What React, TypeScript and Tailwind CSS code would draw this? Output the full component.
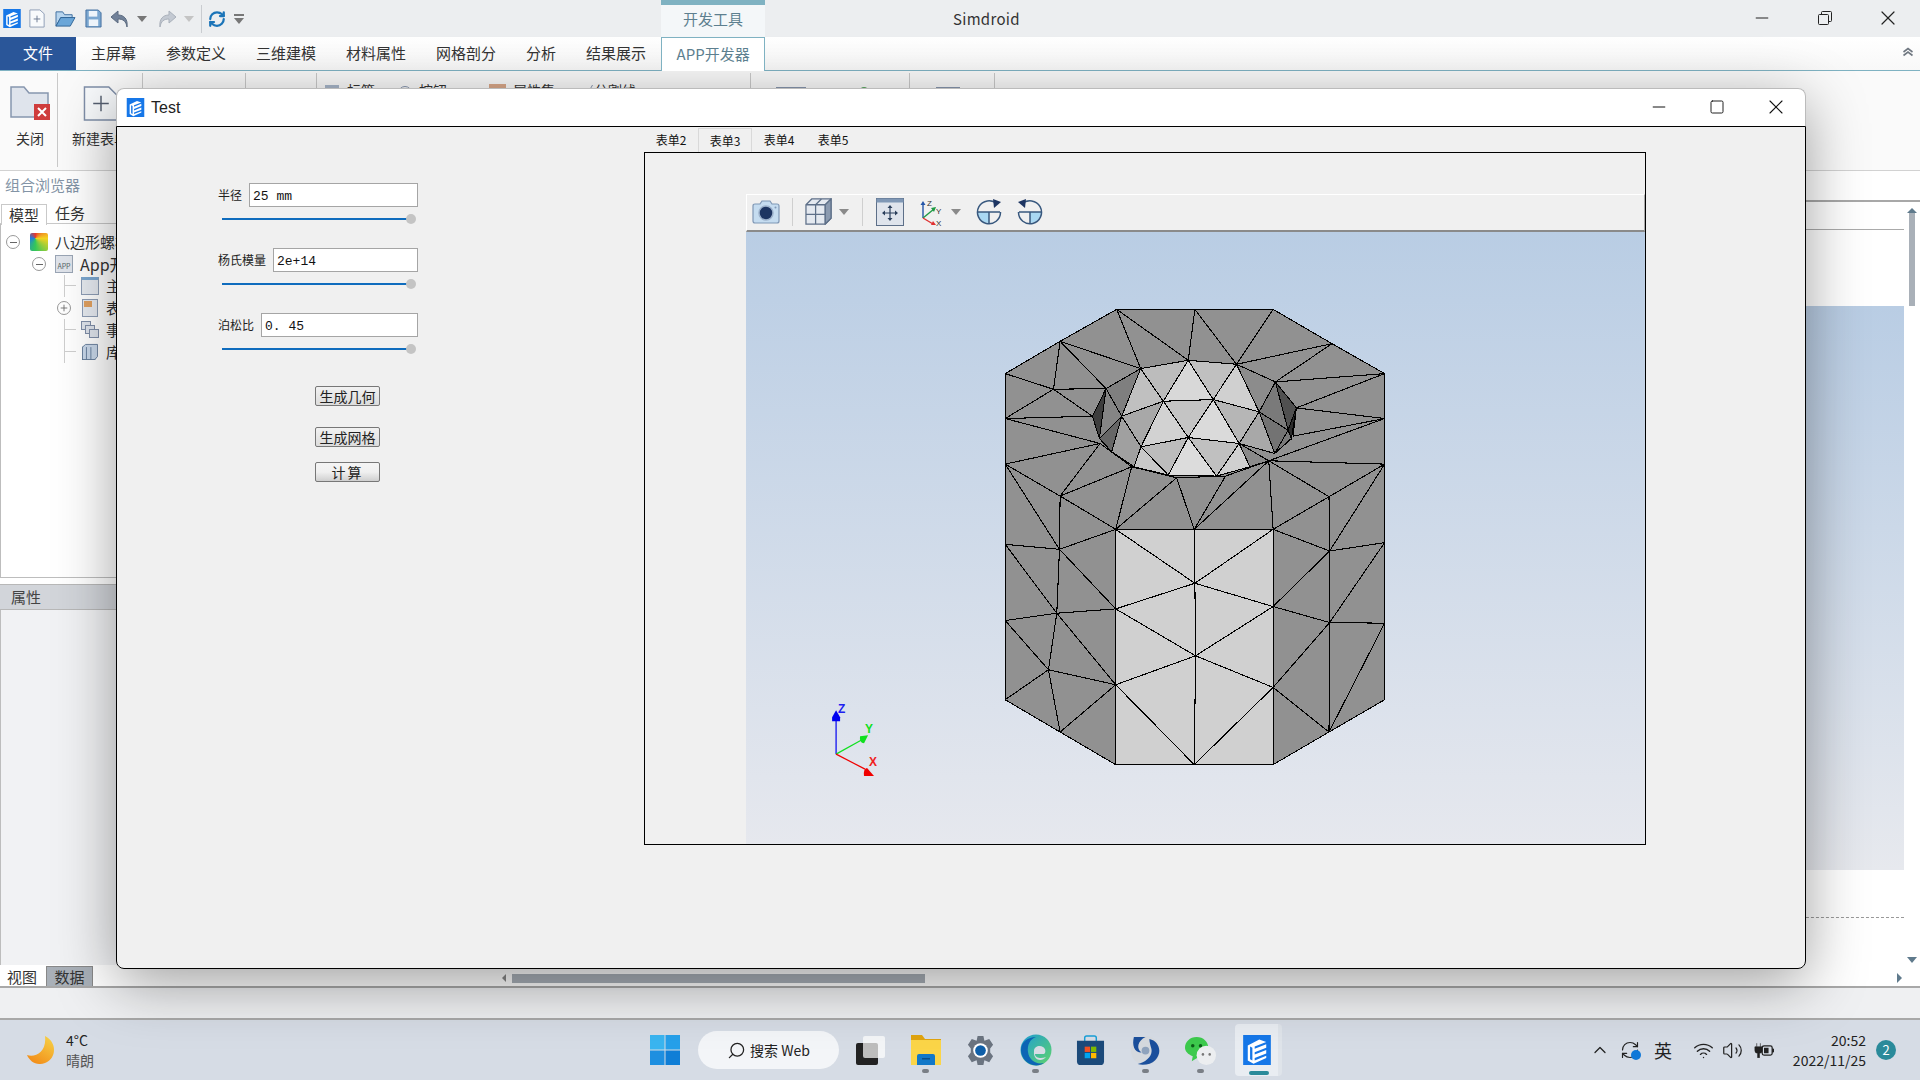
import { ChevronUp, Minus, Plus, RefreshCw, Search, Square, Volume2, Wifi, X } from "lucide-react";

const Logo = ({ className }: { className: string }) => (
  <svg viewBox="0 0 24 26" className={className}>
    <rect width="24" height="26" fill="#1677e8" />
    <path d="M4 9 L14 4 L20 6 L10 10 V12 L20 8 V11 L10 15 V17 L20 13 V16 L10 20 V22 L20 18 V20 L9 25 L4 22 Z" fill="#fff" />
    <path d="M6 10 L8 11 V22 L6 21 Z" fill="#1677e8" />
  </svg>
);

const Caret = ({ className = "border-t-[#8a8a8a]" }: { className?: string }) => (
  <span className={`block w-0 h-0 border-x-[5px] border-x-transparent border-t-[6px] ${className}`} />
);

const tabs = ["主屏幕", "参数定义", "三维建模", "材料属性", "网格剖分", "分析", "结果展示"];

const TitleBar = () => (
  <div className="h-[37px] bg-[#eceef0] flex items-center relative shrink-0">
    <Logo className="w-[20px] h-[19px] ml-[2px]" />
    <svg viewBox="0 0 18 20" className="w-[18px] h-[19px] ml-[6px]">
      <path d="M1.5 1 H12 L16.5 5 V19 H1.5 Z" fill="#f8fafc" stroke="#8e9db5" />
      <path d="M9 7 V14 M5.5 10.5 H12.5" stroke="#6c7a92" />
    </svg>
    <svg viewBox="0 0 22 20" className="w-[21px] h-[19px] ml-[9px]">
      <path d="M1 3 H8 L10 6 H18 V9 H6 L1 18 Z" fill="#b8d5ee" stroke="#3f6f9f" />
      <path d="M6 9 H21 L16 18 H1 Z" fill="#6ba6d8" stroke="#2f6496" />
    </svg>
    <svg viewBox="0 0 18 20" className="w-[17px] h-[19px] ml-[9px]">
      <path d="M1 1 H14 L17 4 V19 H1 Z" fill="#7ba7d0" stroke="#436f9f" />
      <rect x="4" y="2" width="9" height="6" fill="#eef4fa" />
      <rect x="4" y="11" width="10" height="7" fill="#eef4fa" />
    </svg>
    <svg viewBox="0 0 20 20" className="w-[20px] h-[20px] ml-[8px]">
      <path d="M8 2 L1 8 L8 14 V10 C13 10 16 12 17 18 C18 10 14 6 8 6 Z" fill="#718199" stroke="#5c6b80" />
    </svg>
    <span className="ml-[7px]"><Caret className="border-t-[#777]" /></span>
    <svg viewBox="0 0 20 20" className="w-[20px] h-[20px] ml-[10px]">
      <path d="M12 2 L19 8 L12 14 V10 C7 10 4 12 3 18 C2 10 6 6 12 6 Z" fill="#c3c9d2" stroke="#aab1bb" />
    </svg>
    <span className="ml-[7px]"><Caret className="border-t-[#c4c4c4]" /></span>
    <span className="w-px h-[28px] bg-[#c9ccd0] ml-[7px]" />
    <RefreshCw className="w-[18px] h-[20px] ml-[6px] text-[#1b74b8]" strokeWidth={3} />
    <span className="flex flex-col items-center gap-[2px] ml-[8px]">
      <span className="w-[10px] h-[2px] bg-[#777]" />
      <Caret className="border-t-[#777]" />
    </span>
    <div className="absolute left-[661px] top-0 w-[104px] h-[37px] bg-[#f4f7f9] border-t-[5px] border-[#7fb2c2] text-[15px] text-[#5d7f8f] flex items-center justify-center pb-[4px]">
      开发工具
    </div>
    <span className="absolute left-[953px] top-[8px] text-[15px] text-[#333] tracking-[0.3px]">Simdroid</span>
    <Minus className="absolute left-[1752px] top-[8px] w-[20px] h-[20px] text-[#222]" strokeWidth={1.2} />
    <svg viewBox="0 0 14 14" className="absolute left-[1818px] top-[11px] w-[14px] h-[14px]" fill="none" stroke="#222">
      <rect x="0.5" y="3.5" width="10" height="10" rx="1" />
      <path d="M3.5 3.5 V1.5 Q3.5 .5 4.5 .5 H12.5 Q13.5 .5 13.5 1.5 V9.5 Q13.5 10.5 12.5 10.5 H10.5" />
    </svg>
    <X className="absolute left-[1876px] top-[6px] w-[24px] h-[24px] text-[#222]" strokeWidth={1.2} />
  </div>
);

const TabBar = () => (
  <div className="h-[33px] flex bg-gradient-to-b from-white to-[#f8f8f8] relative shrink-0 text-[15px] text-[#333]">
    <div className="w-[76px] bg-[#2a5699] text-white flex items-center justify-center">文件</div>
    {tabs.map((t) => (
      <div key={t} className="px-[15px] flex items-center">{t}</div>
    ))}
    <div className="w-[104px] h-[34px] bg-white border-x border-t border-[#7fb2c2] text-[#5d7f8f] flex items-center justify-center z-10">
      APP开发器
    </div>
    <svg viewBox="0 0 12 10" className="absolute left-[1902px] top-[10px] w-[12px] h-[10px]" fill="none" stroke="#6f7780" strokeWidth="1.6">
      <path d="M1.5 5 L6 1.5 L10.5 5 M1.5 8.5 L6 5 L10.5 8.5" />
    </svg>
  </div>
);

const Ribbon = () => (
  <div className="h-[101px] bg-[#fafafa] border-t border-b border-t-[#7fb2c2] border-b-[#d2d2d2] flex text-[14px] text-[#333] shrink-0">
    <div className="w-[58px] h-[94px] mt-[2px] border-r border-[#c9c9c9] flex flex-col items-center pt-[13px] pl-[3px]">
      <svg viewBox="0 0 40 34" className="w-[40px] h-[34px]">
        <path d="M1 1 H14 L19 7 H38 V31 H1 Z" fill="#dfe4ec" stroke="#8796ae" strokeWidth="1.5" />
        <rect x="24" y="18" width="16" height="16" fill="#cf3c3c" />
        <path d="M28 22 L36 30 M36 22 L28 30" stroke="#fff" strokeWidth="2" />
      </svg>
      <span className="mt-[8px]">关闭</span>
    </div>
    <div className="w-[85px] h-[94px] mt-[2px] border-r border-[#c9c9c9] flex flex-col items-center pt-[13px] whitespace-nowrap">
      <svg viewBox="0 0 36 36" className="w-[36px] h-[35px] ml-[2px]">
        <path d="M1 1 H26 L35 10 V35 H1 Z" fill="#f8fafc" stroke="#7f8ea8" strokeWidth="1.5" />
        <path d="M18 10 V26 M10 18 H26" stroke="#555f70" strokeWidth="1.5" />
      </svg>
      <span className="mt-[7px]">新建表单</span>
    </div>
    <div className="w-[103px] h-[94px] mt-[2px] border-r border-[#c9c9c9]" />
    <div className="w-[71px] h-[94px] mt-[2px] border-r border-[#c9c9c9]" />
    <div className="w-[434px] h-[94px] mt-[2px] border-r border-[#c9c9c9] flex items-start pt-[7px] pl-[8px] text-[14px]">
      <span className="w-[14px] h-[16px] bg-[#a8b6c9] mt-[5px]" />
      <span className="ml-[8px]">标签</span>
      <span className="w-[14px] h-[14px] rounded-full border border-[#8796ae] ml-[23px] mt-[6px]" />
      <span className="ml-[7px]">按钮</span>
      <span className="w-[17px] h-[14px] bg-[#d9a88a] ml-[42px] mt-[4px]" />
      <span className="ml-[7px]">属性集</span>
      <span className="w-[9px] h-[14px] ml-[25px] mt-[5px] border-r border-[#8796ae] -skew-x-[30deg]" />
      <span className="ml-[5px]">分割线</span>
    </div>
    <div className="w-[159px] h-[94px] mt-[2px] border-r border-[#c9c9c9] flex items-start pt-[14px] pl-[25px]">
      <span className="w-[30px] h-[26px] bg-[#d5dbe4] border border-[#8796ae]" />
      <span className="w-[8px] h-[8px] rounded-full bg-[#58a55c] ml-[54px]" />
    </div>
    <div className="w-[85px] h-[94px] mt-[2px] border-r border-[#c9c9c9] flex items-start pt-[14px] pl-[26px]">
      <span className="w-[24px] h-[26px] bg-[#d5dbe4] border border-[#8796ae]" />
    </div>
  </div>
);

const Branch = () => (
  <span className="w-[12px] h-full border-l border-[#cfcfcf] flex flex-col ml-[63px] shrink-0">
    <span className="h-1/2 border-b border-[#cfcfcf]" />
  </span>
);

const LeftPanel = () => (
  <div className="w-[500px] flex flex-col text-[15px] text-[#333] shrink-0">
    <div className="h-[33px] flex items-center pl-[5px] pb-[5px] text-[#8394a6]">组合浏览器</div>
    <div className="h-[20px] flex border-b border-[#c9c9c9] relative">
      <div className="w-[46px] h-[21px] border border-b-0 border-[#c9c9c9] bg-white ml-px flex items-center justify-center z-10">模型</div>
      <div className="ml-[8px] flex items-center">任务</div>
    </div>
    <div className="h-[354px] border-l border-[#bdbdbd] pt-[7px] border-b">
      <div className="h-[22px] flex items-center pl-[5px]">
        <span className="w-[14px] h-[14px] rounded-full border border-[#999] flex items-center justify-center"><span className="w-[7px] h-px bg-[#666]" /></span>
        <span className="w-[18px] h-[18px] ml-[10px] rounded-[2px] bg-[conic-gradient(at_30%_30%,#e8352c,#f4d21f,#34c759,#1f7de0,#e8352c)]" />
        <span className="ml-[7px]">八边形螺栓</span>
      </div>
      <div className="h-[22px] flex items-center pl-[31px]">
        <span className="w-[14px] h-[14px] rounded-full border border-[#999] flex items-center justify-center"><span className="w-[7px] h-px bg-[#666]" /></span>
        <span className="w-[18px] h-[18px] ml-[9px] bg-[#dfe3ea] border border-[#9aa5b5] text-[7px] leading-[20px] text-center text-[#566]">APP</span>
        <span className="ml-[7px] text-[16px]">App开发器</span>
      </div>
      <div className="h-[22px] flex items-center">
        <Branch />
        <span className="w-[18px] h-[18px] ml-[5px] bg-[#e6eaf0] border border-[#8e9db5] border-t-[3px] border-t-[#7ba7d0]" />
        <span className="ml-[7px]">主窗口</span>
      </div>
      <div className="h-[22px] flex items-center pl-[56px]">
        <span className="w-[14px] h-[14px] rounded-full border border-[#999] flex items-center justify-center"><Plus className="w-[10px] h-[10px] text-[#666]" /></span>
        <span className="w-[16px] h-[18px] ml-[11px] bg-[#e6eaf0] border border-[#8e9db5] flex items-start p-px"><span className="w-[8px] h-[6px] bg-[#e0a060]" /></span>
        <span className="ml-[8px]">表单</span>
      </div>
      <div className="h-[22px] flex items-center">
        <Branch />
        <svg viewBox="0 0 18 18" className="w-[18px] h-[18px] ml-[5px]" fill="#dfe4ec" stroke="#7f8ea8">
          <rect x="0.5" y="0.5" width="9" height="8" />
          <rect x="4.5" y="4.5" width="9" height="8" />
          <rect x="8.5" y="8.5" width="9" height="8" />
        </svg>
        <span className="ml-[7px]">事件</span>
      </div>
      <div className="h-[22px] flex items-center">
        <Branch />
        <svg viewBox="0 0 18 18" className="w-[16px] h-[18px] ml-[6px]" fill="#c9d8ea" stroke="#5f7896">
          <rect x="0.5" y="3.5" width="14" height="14" />
          <path d="M5 3.5 V17.5 M10 3.5 V17.5 M0.5 3.5 L4 0.5 H17.5 V14 L14.5 17.5" />
        </svg>
        <span className="ml-[8px]">库</span>
      </div>
    </div>
    <div className="h-[6px]" />
    <div className="h-[26px] bg-[#d2d5da] border-y border-[#b8b8b8] flex items-center pl-[11px] text-[#444]">属性</div>
    <div className="h-[355px] bg-[#f1f2f4] border-l border-[#bdbdbd]" />
    <div className="h-[21px] flex items-end pl-[1px] relative">
      <div className="w-[42px] h-[20px] bg-white flex items-center justify-center pt-[2px]">视图</div>
      <div className="w-[47px] h-[20px] ml-[3px] bg-[#a9b0b8] border border-b-0 border-[#888] flex items-center justify-center pt-[2px]">数据</div>
    </div>
  </div>
);

const DocArea = () => (
  <div className="flex-1 flex flex-col min-w-0">
    <div className="flex-1 mt-[29px] border-t-2 border-[#a8a8a8] flex min-h-0">
      <div className="flex-1 flex flex-col">
        <div className="h-[28px] border-b border-[#aaa]" />
        <div className="h-[76px]" />
        <div className="h-[564px] bg-gradient-to-b from-[#b9cde4] to-[#e7e9ee]" />
        <div className="h-[48px] border-b border-dashed border-[#999]" />
      </div>
      <div className="w-[16px] flex flex-col items-center pt-[6px]">
        <span className="w-0 h-0 border-x-[5px] border-x-transparent border-b-[5px] border-b-[#5f7a8c]" />
        <span className="w-[6px] h-[93px] bg-[#a9b0b8]" />
        <span className="mt-auto mb-[7px]"><Caret className="border-t-[#5f7a8c]" /></span>
      </div>
    </div>
    <div className="h-[16px] flex items-center pr-[18px]">
      <span className="w-0 h-0 border-y-[4px] border-y-transparent border-r-[4px] border-r-[#888] ml-[2px]" />
      <span className="w-[413px] h-[9px] bg-[#a9b0b8] ml-[6px]" />
      <span className="w-0 h-0 border-y-[5px] border-y-transparent border-l-[5px] border-l-[#5f7a8c] ml-auto" />
    </div>
  </div>
);

const TaskIcon = ({ children, running }: { children: React.ReactNode; running?: boolean }) => (
  <div className="relative w-[55px] h-[60px] flex items-center justify-center">
    {children}
    {running && <span className="absolute bottom-[7px] w-[7px] h-[4px] rounded-full bg-[#7a7f86]" />}
  </div>
);

const Taskbar = () => (
  <div className="h-[60px] bg-[#d6dce5] flex items-center shrink-0 text-[#222]">
    <div className="w-[650px] pl-[27px] flex items-center">
      <svg viewBox="0 0 28 28" className="w-[28px] h-[28px]">
        <defs>
          <linearGradient id="moon" x1="0.8" y1="0" x2="0.2" y2="1">
            <stop offset="0" stopColor="#f6cf45" />
            <stop offset="1" stopColor="#f28a17" />
          </linearGradient>
        </defs>
        <path d="M18 0 C30 6 30 22 18 27 C10 30 3 26 0 19 C8 22 20 16 18 0 Z" fill="url(#moon)" />
      </svg>
      <div className="ml-[11px] flex flex-col text-[14px] leading-[20px]">
        <span>4°C</span>
        <span className="text-[#555]">晴朗</span>
      </div>
    </div>
    <svg viewBox="0 0 30 30" className="w-[30px] h-[30px]">
      <rect x="0" y="0" width="14.5" height="14.5" fill="#3ab5f0" />
      <rect x="15.5" y="0" width="14.5" height="14.5" fill="#26a0ea" />
      <rect x="0" y="15.5" width="14.5" height="14.5" fill="#1e8fe0" />
      <rect x="15.5" y="15.5" width="14.5" height="14.5" fill="#0f7ed6" />
    </svg>
    <div className="ml-[18px] w-[141px] h-[38px] rounded-full bg-[#f3f5f8] flex items-center justify-center gap-[4px] text-[14px]">
      <Search className="w-[19px] h-[19px] -scale-x-100" strokeWidth={1.6} />
      <span>搜索 Web</span>
    </div>
    <div className="ml-[4px] flex">
      <TaskIcon>
        <div className="relative w-[29px] h-[29px]">
          <span className="absolute left-0 bottom-0 w-[22px] h-[22px] bg-[#222] rounded-[2px]" />
          <span className="absolute right-0 top-0 w-[22px] h-[22px] bg-white/70 rounded-[2px]" />
        </div>
      </TaskIcon>
      <TaskIcon running>
        <svg viewBox="0 0 32 32" className="w-[32px] h-[32px]">
          <path d="M1 1 H12 L15 5 H31 V31 H1 Z" fill="#e0a40f" />
          <rect x="1" y="6" width="30" height="25" fill="#fbd548" />
          <path d="M7 22 Q7 20 9 20 H23 Q25 20 25 22 V31 H7 Z" fill="#1278c8" />
          <rect x="12" y="24" width="8" height="1.5" fill="#0b4f8a" />
        </svg>
      </TaskIcon>
      <TaskIcon>
        <svg viewBox="0 0 32 32" className="w-[31px] h-[31px]">
          <path d="M13 1 H19 L20 6 L25 4 L29 10 L26 14 V18 L29 22 L25 28 L20 26 L19 31 H13 L12 26 L7 28 L3 22 L6 18 V14 L3 10 L7 4 L12 6 Z" fill="#6b7480" />
          <circle cx="16" cy="16" r="7.5" fill="#fff" />
          <circle cx="16" cy="16" r="5.5" fill="#0f5fa8" />
        </svg>
      </TaskIcon>
      <TaskIcon running>
        <svg viewBox="0 0 32 32" className="w-[32px] h-[32px]">
          <defs>
            <linearGradient id="edge" x1="0" y1="0" x2="1" y2="1">
              <stop offset="0" stopColor="#1f9fd8" />
              <stop offset="1" stopColor="#5fd36a" />
            </linearGradient>
          </defs>
          <circle cx="16" cy="16" r="15.5" fill="url(#edge)" />
          <path d="M1 16 C1 8 8 3 16 3 C10 5 7 11 8 18 C9 26 16 31 24 29 C20 32 14 32 10 30 C5 28 1 22 1 16 Z" fill="#0c65b5" />
          <path d="M14 17 C14 12 20 11 23 13 C26 15 26 19 24 20 H15 C15 24 21 25 26 23 C22 28 13 27 14 17 Z" fill="#d6dce5" />
        </svg>
      </TaskIcon>
      <TaskIcon>
        <svg viewBox="0 0 30 32" className="w-[29px] h-[31px]">
          <path d="M9 7 V3 Q9 1 11 1 H19 Q21 1 21 3 V7" fill="none" stroke="#18a0d8" strokeWidth="1.5" />
          <path d="M1 6 H29 V27 Q29 31 25 31 H5 Q1 31 1 27 Z" fill="#1c4a7a" />
          <rect x="9" y="12" width="5.5" height="5.5" fill="#f25022" />
          <rect x="15.5" y="12" width="5.5" height="5.5" fill="#7fba00" />
          <rect x="9" y="18.5" width="5.5" height="5.5" fill="#00a4ef" />
          <rect x="15.5" y="18.5" width="5.5" height="5.5" fill="#ffb900" />
        </svg>
      </TaskIcon>
      <TaskIcon running>
        <svg viewBox="0 0 32 32" className="w-[31px] h-[31px]">
          <circle cx="16" cy="16" r="15" fill="#d5d9de" />
          <path d="M4 2 H16 C8 6 6 14 12 18 C4 18 2 10 4 2 Z" fill="#1b4f9c" />
          <path d="M20 4 C30 6 34 18 26 26 C22 30 14 32 8 30 C16 28 24 22 22 14 C21 10 20 7 20 4 Z" fill="#1b4f9c" />
          <circle cx="16" cy="16" r="4" fill="#8fa3bd" />
        </svg>
      </TaskIcon>
      <TaskIcon running>
        <svg viewBox="0 0 32 32" className="w-[31px] h-[31px]">
          <path d="M12 2 C19 2 24 7 24 13 C24 19 19 24 12 24 L7 27 L8 22 C3 20 0 17 0 13 C0 7 5 2 12 2 Z" fill="#3dca4d" />
          <circle cx="8" cy="11" r="1.8" fill="#0d5f1a" />
          <circle cx="16" cy="11" r="1.8" fill="#0d5f1a" />
          <circle cx="22" cy="21" r="10" fill="#eceef0" />
          <circle cx="18.5" cy="20" r="1.3" fill="#777" />
          <circle cx="25.5" cy="20" r="1.3" fill="#777" />
        </svg>
      </TaskIcon>
      <div className="relative w-[55px] h-[60px] ml-[3px] flex items-center justify-center">
        <div className="w-[47px] h-[52px] rounded-[4px] bg-[#e9edf2] flex items-center justify-center border-r-4 border-[#dfe4ea]">
          <Logo className="w-[30px] h-[30px]" />
        </div>
        <span className="absolute bottom-[5px] w-[20px] h-[4px] rounded-full bg-[#2a8a9a]" />
      </div>
    </div>
    <div className="ml-auto pr-[24px] flex items-center">
      <ChevronUp className="w-[20px] h-[20px]" strokeWidth={1.5} />
      <div className="relative ml-[10px]">
        <RefreshCw className="w-[20px] h-[20px]" strokeWidth={1.4} />
        <span className="absolute right-[-1px] bottom-0 w-[10px] h-[10px] rounded-full bg-[#0f78d8]" />
      </div>
      <span className="ml-[14px] text-[18px] leading-none">英</span>
      <Wifi className="ml-[21px] w-[21px] h-[21px]" strokeWidth={1.6} />
      <Volume2 className="ml-[8px] w-[21px] h-[21px]" strokeWidth={1.4} />
      <svg viewBox="0 0 22 16" className="ml-[11px] w-[20px] h-[15px]">
        <path d="M3 0 V4 M7 0 V4 M1 4 H9 V8 Q9 11 6 11 V16 H4 V11 Q1 11 1 8 Z" fill="#222" stroke="#222" strokeWidth="0.7" />
        <rect x="9" y="3" width="11" height="10" rx="2" fill="none" stroke="#222" strokeWidth="1.4" />
        <rect x="11" y="5" width="5" height="6" fill="#222" />
        <rect x="20" y="6" width="2" height="4" fill="#222" />
      </svg>
      <div className="ml-[14px] w-[78px] flex flex-col items-end text-[14px] leading-[20px] whitespace-nowrap">
        <span>20:52</span>
        <span>2022/11/25</span>
      </div>
      <span className="ml-[10px] w-[20px] h-[20px] rounded-full bg-[#2a8a9a] text-white text-[13px] flex items-center justify-center">2</span>
    </div>
  </div>
);

const fields = [
  { label: "半径", value: "25 mm" },
  { label: "杨氏模量", value: "2e+14" },
  { label: "泊松比", value: "0. 45" },
];

const FormColumn = () => (
  <div className="w-[527px] pl-[101px] pt-[56px] shrink-0">
    <div className="w-[200px]">
      {fields.map((f) => (
        <div key={f.label} className="mb-[24px]">
          <div className="h-[24px] flex items-center gap-[7px]">
            <span className="text-[12px] text-[#222] whitespace-nowrap">{f.label}</span>
            <div className="flex-1 h-[24px] bg-white border border-[#a5a5a5] pl-[3px] pt-[4px] flex items-center [font-family:'Liberation_Mono',monospace] text-[13px] text-[#111] whitespace-pre">
              {f.value}
            </div>
          </div>
          <div className="h-[10px] mt-[7px] ml-[4px] w-[194px] flex items-center">
            <span className="flex-1 h-[2px] bg-[#0f6cbd]" />
            <span className="w-[10px] h-[10px] rounded-full bg-[#c4c4c4] -ml-[5px]" />
          </div>
        </div>
      ))}
    </div>
    <div className="ml-[97px] mt-[32px] w-[65px] flex flex-col text-[14px] text-[#222]">
      <button className="h-[20px] rounded-[2px] border border-[#777] bg-gradient-to-b from-[#f2f2f2] to-[#dcdcdc] flex items-center justify-center whitespace-nowrap">生成几何</button>
      <button className="h-[20px] mt-[21px] rounded-[2px] border border-[#777] bg-gradient-to-b from-[#f2f2f2] to-[#dcdcdc] flex items-center justify-center whitespace-nowrap">生成网格</button>
      <button className="h-[20px] mt-[15px] rounded-[2px] border border-[#777] bg-gradient-to-b from-[#f4f4f4] via-[#f0f0f0] to-[#cfcfcf] flex items-center justify-center whitespace-nowrap tracking-[2px]">计算</button>
    </div>
  </div>
);

const ToolSep = () => <span className="block w-px h-[28px] bg-[#cfcfcf]" />;

const ModelToolbar = () => (
  <div className="h-[38px] bg-[#f0f0f0] border-t border-white border-l border-b-2 border-b-[#8a8a8a] border-r border-r-[#aaa] flex items-center pl-[5px] pb-[2px]">
    <svg viewBox="0 0 28 24" className="w-[28px] h-[24px]">
      <path d="M1 6 Q1 4 3 4 H8 L10 1 H18 L20 4 H25 Q27 4 27 6 V21 Q27 23 25 23 H3 Q1 23 1 21 Z" fill="#c5dcf0" stroke="#7f97b5" strokeWidth="1.2" />
      <circle cx="14" cy="13" r="7" fill="#1d3562" stroke="#9db2cc" strokeWidth="1.5" />
      <circle cx="23.5" cy="7.5" r="1" fill="#7f97b5" />
    </svg>
    <span className="ml-[12px]"><ToolSep /></span>
    <svg viewBox="0 0 28 28" className="w-[29px] h-[27px] ml-[11px]" fill="#e4e9f0" stroke="#5d6f88" strokeWidth="1.3">
      <path d="M1 7 L7 1 H27 V21 L21 27 H1 Z" />
      <path d="M1 7 H21 V27 M21 7 L27 1 M11 7 V27 M1 17 H21 M11 7 L17 1 M21 17 L27 11" fill="none" />
      <path d="M21 7 L27 1 V21 L21 27 Z" fill="#8a9ab0" />
    </svg>
    <span className="ml-[6px]"><Caret /></span>
    <span className="ml-[13px]"><ToolSep /></span>
    <svg viewBox="0 0 28 28" className="w-[28px] h-[28px] ml-[13px]" fill="none">
      <rect x="0.5" y="0.5" width="27" height="27" fill="#dfe4ec" stroke="#5d6f88" />
      <rect x="0.5" y="0.5" width="27" height="4" fill="#7f97b5" />
      <path d="M14 8 V22 M7 15 H21" stroke="#2b3f5c" strokeWidth="1.2" />
      <path d="M14 7 L11.5 10 H16.5 Z M14 23 L11.5 20 H16.5 Z M6 15 L9 12.5 V17.5 Z M22 15 L19 12.5 V17.5 Z" fill="#2b3f5c" />
    </svg>
    <svg viewBox="0 0 24 28" className="w-[24px] h-[28px] ml-[14px]" fill="none">
      <path d="M5 20 V6" stroke="#2455a8" strokeWidth="1.4" />
      <path d="M5 3 L2.5 7 H7.5 Z" fill="#2455a8" />
      <path d="M5 20 L16 11" stroke="#1f9a44" strokeWidth="1.4" />
      <path d="M18 9 L13 10 L16 14 Z" fill="#1f9a44" />
      <path d="M5 20 L15 26" stroke="#e03030" strokeWidth="1.4" />
      <path d="M18 27 L13 27 L15 23 Z" fill="#e03030" />
      <text x="9" y="8" fontSize="8" fill="#333" fontFamily="Liberation Sans">Z</text>
      <text x="18" y="16" fontSize="8" fill="#333" fontFamily="Liberation Sans">Y</text>
      <text x="18" y="28" fontSize="8" fill="#333" fontFamily="Liberation Sans">X</text>
    </svg>
    <span className="ml-[9px]"><Caret /></span>
    <svg viewBox="0 0 26 26" className="w-[26px] h-[26px] ml-[15px]" fill="none">
      <path d="M13 13 H2 A11 11 0 0 0 13 24 Z" fill="#a9d8f2" />
      <path d="M2 13 H24 M13 13 V24 M21 5 A11.5 11.5 0 1 0 24.5 13" stroke="#38587e" strokeWidth="1.5" />
      <path d="M17 0 L25 3 L18 9 Z" fill="#1d3562" />
    </svg>
    <svg viewBox="0 0 26 26" className="w-[26px] h-[26px] ml-[15px]" fill="none">
      <path d="M13 13 H24 A11 11 0 0 1 13 24 Z" fill="#a9d8f2" />
      <path d="M2 13 H24 M13 13 V24 M5 5 A11.5 11.5 0 1 1 1.5 13" stroke="#38587e" strokeWidth="1.5" />
      <path d="M9 0 L1 3 L8 9 Z" fill="#1d3562" />
    </svg>
  </div>
);

// 网格顶点，坐标是放大 3 倍后的值，下半部分 y 加 630
const V: Record<string, [number, number]> = {
  A: [75, 250], B: [240, 153], C: [410, 57], D: [645, 57], E: [880, 57], F: [1057, 160], G: [1215, 250],
  H: [220, 297], I: [378, 295], J: [482, 235], K: [625, 210], L: [770, 222], M: [887, 275], N: [950, 353],
  O: [75, 385], P: [337, 378], Q: [360, 460], R: [75, 522], S: [240, 618], T: [455, 530], U: [590, 563],
  W: [867, 512], X: [940, 438], Y: [1215, 385], Z: [1215, 522], AD: [1048, 620], VV: [737, 558],
  a1: [75, 763], a2: [238, 778], a3: [407, 718], a4: [643, 718], a5: [880, 718], a6: [1050, 783], a7: [1215, 758],
  b1: [75, 992], b2: [230, 970], b3: [407, 957], b4: [645, 880], b5: [880, 950], b6: [1050, 998], b7: [1215, 1000],
  c1: [205, 1140], c2: [407, 1185], c3: [647, 1098], c4: [880, 1193],
  d1: [75, 1230], d2: [240, 1327], d3: [407, 1425], d4: [643, 1425], d5: [880, 1425], d6: [1048, 1327], d7: [1215, 1230],
};

const edges =
  "A-H B-H B-I B-J C-J C-K D-K D-L E-L F-L F-M G-M G-N Y-N Y-X Y-W Z-W H-I H-O H-P I-P O-P O-Q R-Q Q-S R-S S-T S-a3 T-a3 T-U U-a3 U-a4 VV-a4 W-a4 W-a5 W-AD Z-AD AD-a5 AD-a6 Z-a6 S-a2 R-a2 U-VV VV-W Q-T M-N N-X a3-a4 a4-a5 d3-d5 a1-a2 a2-a3 a2-b3 a2-b2 a1-b2 b1-b2 b2-b3 b1-c1 b2-c1 b2-c2 c1-c2 c1-d1 c1-d2 c2-d2 a3-d3 a3-b4 a4-b4 a5-b4 b4-c3 c3-d4 b3-b4 b4-b5 b3-c3 b5-c3 c2-c3 c3-c4 c2-d4 c4-d4 a5-d5 a5-a6 a6-a7 b5-a6 a6-b6 b5-b6 a7-b6 b6-b7 b6-c4 b6-d6 b7-d6 c4-d6"
    .split(" ")
    .map((e) => e.split("-"));

const faces: [string, string][] = [
  ["482,235 378,295 425,378", "#7f7f7f"],
  ["378,295 425,378 358,445", "#858585"],
  ["378,295 337,378 358,445", "#3e3e3e"],
  ["358,445 425,378 395,485", "#666666"],
  ["425,378 483,470 462,530 395,485", "#a0a0a0"],
  ["770,222 887,275 838,365", "#8c8c8c"],
  ["887,275 925,420 838,365", "#7a7a7a"],
  ["838,365 925,420 885,490", "#737373"],
  ["887,275 950,353 925,420", "#505050"],
  ["950,353 935,445 925,420", "#2c2c2c"],
  ["925,420 935,445 885,490", "#7a7a7a"],
  ["778,460 867,512 810,530", "#8a8a8a"],
  ["482,235 625,210 550,333", "#bcbcbc"],
  ["625,210 700,328 550,333", "#d8d8d8"],
  ["625,210 770,222 700,328", "#c0c0c0"],
  ["770,222 838,365 700,328", "#d0d0d0"],
  ["482,235 550,333 425,378", "#c0c0c0"],
  ["550,333 700,328 625,442", "#c4c4c4"],
  ["700,328 778,460 625,442", "#dadada"],
  ["700,328 838,365 778,460", "#b6b6b6"],
  ["425,378 550,333 483,470", "#a8a8a8"],
  ["550,333 625,442 483,470", "#d2d2d2"],
  ["838,365 885,490 778,460", "#a8a8a8"],
  ["483,470 625,442 565,555", "#bcbcbc"],
  ["625,442 710,558 565,555", "#dcdcdc"],
  ["625,442 778,460 710,558", "#c0c0c0"],
  ["778,460 810,530 710,558", "#d0d0d0"],
  ["483,470 565,555 462,530", "#c8c8c8"],
];

const MeshViewport = () => (
  <div className="flex-1 min-h-0 bg-gradient-to-b from-[#b9cde4] to-[#e6e8ee]">
    <svg viewBox="0 0 898 613" className="w-full h-full block">
      <g transform="translate(233.4 58.5) scale(0.33333)" shapeRendering="crispEdges">
        <polygon
          points="75,250 240,153 410,57 880,57 1057,160 1215,250 1215,1230 1048,1327 880,1425 407,1425 240,1327 75,1230"
          fill="#919191"
          stroke="#000"
          strokeWidth="3.2"
        />
        <rect x="407" y="718" width="473" height="707" fill="#d0d0d0" />
        {faces.map(([points, fill]) => (
          <polygon key={points} points={points} fill={fill} stroke="#000" strokeWidth="3.2" />
        ))}
        {edges.map(([a, b]) => (
          <line key={a + b} x1={V[a][0]} y1={V[a][1]} x2={V[b][0]} y2={V[b][1]} stroke="#000" strokeWidth="3.2" />
        ))}
      </g>
      <g strokeWidth="1.2" fontFamily="Liberation Sans" fontWeight="bold" fontSize="12">
        <path d="M89 523 V488" stroke="#0000f0" />
        <path d="M89 479 L85 486 L85 490 H93 L93 486 Z" fill="#0000f0" />
        <text x="91" y="482" fill="#2020f0">Z</text>
        <path d="M89 523 L114 509" stroke="#10e020" />
        <path d="M113 505 L121 504 L117 512 Q112 512 113 505 Z" fill="#10e020" />
        <text x="118" y="502" fill="#10e020">Y</text>
        <path d="M89 523 L118 538" stroke="#f00000" />
        <path d="M120 537 L127 545 H117 Q116 538 120 537 Z" fill="#f00000" />
        <text x="122" y="535" fill="#f02020">X</text>
      </g>
    </svg>
  </div>
);

const FormTabs = () => (
  <div className="h-[24px] flex text-[12px] text-[#111]">
    {["表单2", "表单3", "表单4", "表单5"].map((t) => (
      <div
        key={t}
        className={`w-[54px] flex items-center justify-center ${t === "表单3" ? "border-x border-t border-[#d9d9d9]" : ""}`}
      >
        {t}
      </div>
    ))}
  </div>
);

const TestWindow = () => (
  <div className="absolute left-[116px] top-[88px] w-[1690px] h-[881px] flex flex-col rounded-[8px] shadow-[0_14px_60px_rgba(0,0,0,0.38)]">
    <div className="h-[38px] bg-white rounded-t-[8px] border-t border-x border-[#bbb] flex items-center pl-[9px] relative shrink-0">
      <Logo className="w-[19px] h-[19px]" />
      <span className="ml-[6px] text-[16px] text-[#222] [font-family:'Liberation_Sans',sans-serif]">Test</span>
      <Minus className="absolute left-[1532px] top-[8px] w-[20px] h-[20px] text-[#111]" strokeWidth={1.2} />
      <Square className="absolute left-[1592px] top-[10px] w-[16px] h-[16px] text-[#111]" strokeWidth={1.4} />
      <X className="absolute left-[1647px] top-[6px] w-[24px] h-[24px] text-[#111]" strokeWidth={1.1} />
    </div>
    <div className="flex-1 min-h-0 bg-[#f0f0f0] border border-black rounded-b-[8px] flex">
      <FormColumn />
      <div className="w-[1002px] pt-px flex flex-col shrink-0">
        <FormTabs />
        <div className="h-[693px] border border-black pt-[41px] pl-[101px] flex flex-col">
          <ModelToolbar />
          <MeshViewport />
        </div>
      </div>
    </div>
  </div>
);

export default function App() {
  return (
    <div className="relative w-[1920px] h-[1080px] overflow-hidden bg-white flex flex-col [font-family:'Noto_Sans_CJK_SC','Noto_Sans',sans-serif]">
      <TitleBar />
      <TabBar />
      <Ribbon />
      <div className="flex-1 min-h-0 flex">
        <LeftPanel />
        <DocArea />
      </div>
      <div className="h-[34px] bg-[#eff0f2] border-y-2 border-[#a8a8a8] shrink-0" />
      <Taskbar />
      <TestWindow />
    </div>
  );
}
